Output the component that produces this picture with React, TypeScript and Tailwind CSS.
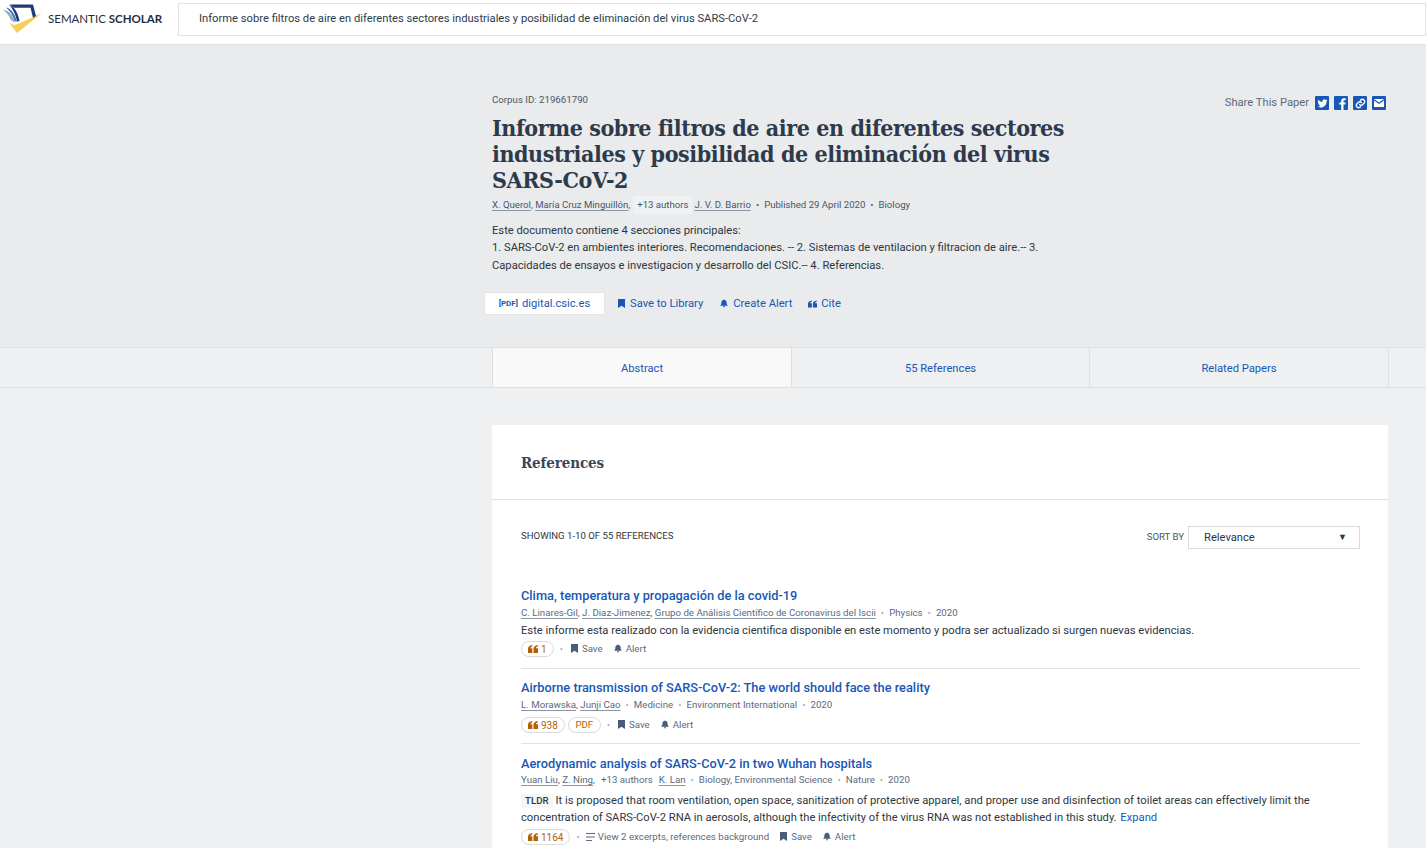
import React from 'react';

function QuoteIcon({ className }: { className: string }) {
  return (
    <svg viewBox="0 0 10 8" className={className} fill="currentColor">
      <path d="M0 4C0 2 1.200 .5 4.200 0v1.500C3 1.800 2.400 2.400 2.300 3.200h2V8H0z" />
      <path d="M5.500 4c0-2 1.200-3.500 4.200-4v1.500C8.500 1.800 7.900 2.400 7.800 3.200H10V8H5.500z" />
    </svg>
  );
}

function BookmarkIcon({ className }: { className: string }) {
  return (
    <svg viewBox="0 0 7 9" className={className} fill="currentColor">
      <path d="M0 0h7v9L3.500 6.800 0 9z" />
    </svg>
  );
}

function BellIcon({ className }: { className: string }) {
  return (
    <svg viewBox="0 0 9 9" className={className} fill="currentColor">
      <path d="M4.500 0c.4 0 .7.300.7.700C6.700 1 7.500 2.300 7.500 3.800c0 1.500.5 2.300 1.500 3.200H0c1-.9 1.500-1.700 1.500-3.200C1.500 2.300 2.300 1 3.800.7c0-.4.300-.7.700-.7z" />
      <path d="M3.300 7.700h2.400c0 .7-.5 1.300-1.200 1.300s-1.200-.6-1.200-1.300z" />
    </svg>
  );
}

function Logo() {
  return (
    <svg viewBox="0 0 42 30" className="w-[42px] h-[30px] shrink-0">
      <path d="M9 19.500 L17 30 L42 10 L19 20.500 L14 22 Z" fill="#f5cf5b" />
      <path d="M10 1.500 L33 1.500 L36 13 L33 14.800 L30.500 4.800 L14 4.800 Z" fill="#1e3a78" />
      <path d="M3 7 C8.500 7 12.500 11 14.500 20 L11 17 C9 12.500 7 9.500 3 7Z" fill="#8fa9cc" />
      <path d="M6 4.500 C11.500 5.500 15 11 16.800 19 L14.300 18 C12.800 12 10 8 6 4.500Z" fill="#4a73b3" />
      <path d="M9 1.500 C14.500 3.500 18 10 19.500 18 L17 18.500 C15.500 11 13 6 9 1.500Z" fill="#1e3a78" />
    </svg>
  );
}

function Dot() {
  return <span className="text-[#a4adb8] mx-[5px]">•</span>;
}

function CitePill({ n }: { n: string }) {
  return (
    <span className="inline-flex items-center gap-[3px] h-[16px] px-[6px] rounded-full border border-[#d9dadb] text-[#b45f06] text-[10px]">
      <QuoteIcon className="w-[10px] h-[8px]" />
      {n}
    </span>
  );
}

function Actions() {
  return (
    <>
      <span className="inline-flex items-center gap-[4px]">
        <BookmarkIcon className="w-[7px] h-[9px] text-[#4a5c7a]" />
        Save
      </span>
      <span className="inline-flex items-center gap-[4px] ml-[11px]">
        <BellIcon className="w-[8px] h-[9px] text-[#4a5c7a]" />
        Alert
      </span>
    </>
  );
}

function Author({ name }: { name: string }) {
  return <span className="underline underline-offset-2 decoration-[#8b96a5]">{name}</span>;
}

export default function App() {
  return (
    <div className="h-[848px] overflow-hidden bg-[#eff0f2] font-['Roboto',sans-serif] text-[#2e3640]">
      {/* Header */}
      <div className="h-[45px] bg-white border-b border-[#dedfe0] flex pt-[3px]">
        <div className="w-[178px] shrink-0 flex items-start">
          <Logo />
          <div className="ml-[6px] mt-[8px] text-[11.500px] leading-[15px] text-[#1f2e3d] font-['Lato',sans-serif]">
            SEMANTIC <span className="font-bold">SCHOLAR</span>
          </div>
        </div>
        <div className="flex-1 h-[33px] border border-[#e1e2e3] flex items-center pl-[20px] text-[11.200px] text-[#2e3b4a]">
          Informe sobre filtros de aire en diferentes sectores industriales y posibilidad de eliminación del virus SARS-CoV-2
        </div>
      </div>

      {/* Paper header */}
      <div className="h-[302px] bg-[#e9ebed] pl-[492px] pr-[40px] pt-[48px] relative">
        <div className="absolute right-[40px] top-[50px] flex items-center gap-[5px] text-[11.200px] text-[#5b6a7d]">
          <span className="mr-[1px]">Share This Paper</span>
          <span className="w-[14px] h-[14px] bg-[#1857b6] rounded-[1px] flex items-center justify-center">
            <svg viewBox="0 0 24 24" className="w-[11px] h-[11px]" fill="#fff"><path d="M23 5c-.8.4-1.700.6-2.600.7.9-.6 1.600-1.400 2-2.500-.9.5-1.800.9-2.900 1.100A4.500 4.500 0 0 0 11.800 8.500C8 8.300 4.700 6.500 2.500 3.700c-1.200 2-.6 4.700 1.400 6-.7 0-1.400-.2-2-.6 0 2.200 1.500 4.100 3.600 4.500-.7.2-1.400.2-2 .1.600 1.800 2.200 3.100 4.200 3.100A9 9 0 0 1 1 18.700 12.800 12.800 0 0 0 20.800 7.300c.9-.6 1.600-1.400 2.200-2.300z" /></svg>
          </span>
          <span className="w-[14px] h-[14px] bg-[#1857b6] rounded-[1px] flex items-end justify-end overflow-hidden">
            <svg viewBox="0 0 14 14" className="w-[14px] h-[14px]" fill="#fff"><path d="M9.500 14V8.600h1.800l.3-2.100H9.500V5.200c0-.6.200-1 1-1h1.200V2.300c-.2 0-.9-.1-1.700-.1-1.700 0-2.800 1-2.800 2.900v1.400H5.300v2.100h1.900V14z" /></svg>
          </span>
          <span className="w-[14px] h-[14px] bg-[#1857b6] rounded-[1px] flex items-center justify-center">
            <svg viewBox="0 0 24 24" className="w-[11px] h-[11px]" fill="none" stroke="#fff" strokeWidth="3" strokeLinecap="round"><path d="M10 14a5 5 0 0 0 7 0l3-3a5 5 0 0 0-7-7l-1 1" /><path d="M14 10a5 5 0 0 0-7 0l-3 3a5 5 0 0 0 7 7l1-1" /></svg>
          </span>
          <span className="w-[14px] h-[14px] bg-[#1857b6] rounded-[1px] flex items-center justify-center">
            <svg viewBox="0 0 14 14" className="w-[14px] h-[14px]"><rect x="2" y="3" width="10" height="8" fill="#fff" /><path d="M2 3.800 L7 7.300 L12 3.800" fill="none" stroke="#1857b6" strokeWidth="1.300" /></svg>
          </span>
        </div>

        <div className="text-[9.700px] leading-[14px] text-[#4a5666]">Corpus ID: 219661790</div>
        <h1 className="mt-[8px] w-[590px] font-['DejaVu_Serif',serif] font-stretch-condensed font-bold text-[23px] leading-[26px] tracking-[-0.42px] text-[#2e3a4b]">
          Informe sobre filtros de aire en diferentes sectores industriales y posibilidad de eliminación del virus SARS-CoV-2
        </h1>
        <div className="mt-[1px] h-[22px] flex items-center text-[9.600px] text-[#4a5666]">
          <Author name="X. Querol" />,&nbsp;<Author name="María Cruz Minguillón" />,
          <span className="bg-[#f0f1f3] rounded-[2px] px-[4px] h-[18px] flex items-center ml-[3px] mr-[2px]">+13 authors</span>
          <Author name="J. V. D. Barrio" />
          <span className="mx-[5px]">•</span>Published 29 April 2020<span className="mx-[5px]">•</span>Biology
        </div>
        <p className="mt-[5.700px] w-[560px] text-[11.200px] leading-[17.500px] text-[#2e3640]">
          Este documento contiene 4 secciones principales:<br />
          1. SARS-CoV-2 en ambientes interiores. Recomendaciones. -- 2. Sistemas de ventilacion y filtracion de aire.-- 3. Capacidades de ensayos e investigacion y desarrollo del CSIC.-- 4. Referencias.
        </p>
        <div className="mt-[18.300px] -ml-[8px] flex items-center text-[11.200px] text-[#1857b6]">
          <span className="w-[121px] h-[23px] bg-white rounded-[2px] border border-[#e2e4e6] flex items-center justify-center gap-[4px]">
            <span className="text-[8px] font-bold">[PDF]</span>
            digital.csic.es
          </span>
          <span className="ml-[13px] inline-flex items-center gap-[5px]">
            <BookmarkIcon className="w-[7px] h-[9px]" />Save to Library
          </span>
          <span className="ml-[17px] inline-flex items-center gap-[5px]">
            <BellIcon className="w-[8px] h-[9px]" />Create Alert
          </span>
          <span className="ml-[16px] inline-flex items-center gap-[4px]">
            <QuoteIcon className="w-[9px] h-[8px]" />Cite
          </span>
        </div>
      </div>

      {/* Tabs */}
      <div className="h-[41px] border-y border-[#dedfe0] pl-[492px] pr-[37px]">
        <div className="h-full flex border-x border-[#dedfe0] text-[11.200px] text-[#1857b6]">
          <div className="w-[299px] bg-[#f9f9f9] border-r border-[#dedfe0] flex items-center justify-center pt-[3px]">Abstract</div>
          <div className="w-[298px] border-r border-[#dedfe0] flex items-center justify-center pt-[3px]">55 References</div>
          <div className="flex-1 flex items-center justify-center pt-[3px]">Related Papers</div>
        </div>
      </div>

      {/* References card */}
      <div className="ml-[492px] mt-[37px] w-[896px] bg-white pb-[20px]">
        <div className="h-[75px] border-b border-[#e1e2e3] flex items-center pl-[29px] pt-[2px] font-['DejaVu_Serif',serif] font-stretch-condensed font-bold text-[15px] tracking-[-0.1px] text-[#3a4656]">
          References
        </div>
        <div className="pl-[29px] pr-[28px]">
          <div className="h-[88px] flex items-start justify-between pt-[26px]">
            <span className="mt-[3px] text-[9.600px] leading-[14px] text-[#2e3640]">SHOWING 1-10 OF 55 REFERENCES</span>
            <div className="flex items-center gap-[4px] text-[9.600px] text-[#4a5666]">
              SORT BY
              <div className="w-[172px] h-[23px] border border-[#d9dadb] flex items-center justify-between pl-[15px] pr-[12px] text-[11.200px] text-[#2e3640]">
                <span className="pt-[1px]">Relevance</span>
                <span className="text-[9px]">▼</span>
              </div>
            </div>
          </div>

          <div className="h-[81px] border-b border-[#e1e2e3]">
            <div className="text-[12.800px] leading-[16px] font-medium text-[#1857b6]">Clima, temperatura y propagación de la covid-19</div>
            <div className="mt-[1px] text-[9.700px] leading-[16px] text-[#5b6a7d] flex">
              <Author name="C. Linares-Gil" />,&nbsp;<Author name="J. Diaz-Jimenez" />,&nbsp;<Author name="Grupo de Análisis Científico de Coronavirus del Iscii" />
              <Dot />Physics<Dot />2020
            </div>
            <p className="mt-[1px] text-[11.200px] leading-[17px] text-[#2e3640]">Este informe esta realizado con la evidencia cientifica disponible en este momento y podra ser actualizado si surgen nuevas evidencias.</p>
            <div className="mt-[2px] flex items-center text-[9.700px] text-[#5b6a7d]">
              <CitePill n="1" /><span className="text-[#a4adb8] ml-[6px] mr-[8px]">•</span><Actions />
            </div>
          </div>

          <div className="h-[75px] border-b border-[#e1e2e3] pt-[11px]">
            <div className="text-[12.800px] leading-[16px] font-medium text-[#1857b6]">Airborne transmission of SARS-CoV-2: The world should face the reality</div>
            <div className="mt-[1px] text-[9.700px] leading-[16px] text-[#5b6a7d] flex">
              <Author name="L. Morawska" />,&nbsp;<Author name="Junji Cao" />
              <Dot />Medicine<Dot />Environment International<Dot />2020
            </div>
            <div className="mt-[4px] flex items-center text-[9.700px] text-[#5b6a7d]">
              <CitePill n="938" />
              <span className="ml-[3px] h-[16px] px-[6.500px] rounded-full border border-[#d9dadb] text-[#b45f06] flex items-center">PDF</span>
              <span className="text-[#a4adb8] ml-[6px] mr-[8px]">•</span><Actions />
            </div>
          </div>

          <div className="pt-[12px]">
            <div className="text-[12.800px] leading-[16px] font-medium text-[#1857b6]">Aerodynamic analysis of SARS-CoV-2 in two Wuhan hospitals</div>
            <div className="text-[9.700px] leading-[16px] text-[#5b6a7d] flex items-center">
              <Author name="Yuan Liu" />,&nbsp;<Author name="Z. Ning" />,
              <span className="mx-[6px]">+13 authors</span>
              <Author name="K. Lan" />
              <Dot />Biology, Environmental Science<Dot />Nature<Dot />2020
            </div>
            <p className="mt-[4px] text-[11.200px] leading-[17px] text-[#2e3640]">
              <span className="inline-block bg-[#f5f6f7] rounded-[2px] px-[4px] mr-[3px] text-[9.700px] font-medium leading-[14px]">TLDR</span>
              It is proposed that room ventilation, open space, sanitization of protective apparel, and proper use and disinfection of toilet areas can effectively limit the concentration of SARS-CoV-2 RNA in aerosols, although the infectivity of the virus RNA was not established in this study. <span className="text-[#1857b6] ml-[1px]">Expand</span>
            </p>
            <div className="mt-[3px] flex items-center text-[9.700px] text-[#5b6a7d]">
              <CitePill n="1164" /><span className="text-[#a4adb8] ml-[6px] mr-[6px]">•</span>
              <span className="inline-flex items-center gap-[3px] mr-[11px]">
                <svg viewBox="0 0 9 8" className="w-[9px] h-[8px]" fill="currentColor"><path d="M0 0h9v1H0zM0 3.500h9v1H0zM0 7h6v1H0z" /></svg>
                View 2 excerpts, references background
              </span>
              <Actions />
            </div>
          </div>
        </div>
      </div>
    </div>
  );
}
